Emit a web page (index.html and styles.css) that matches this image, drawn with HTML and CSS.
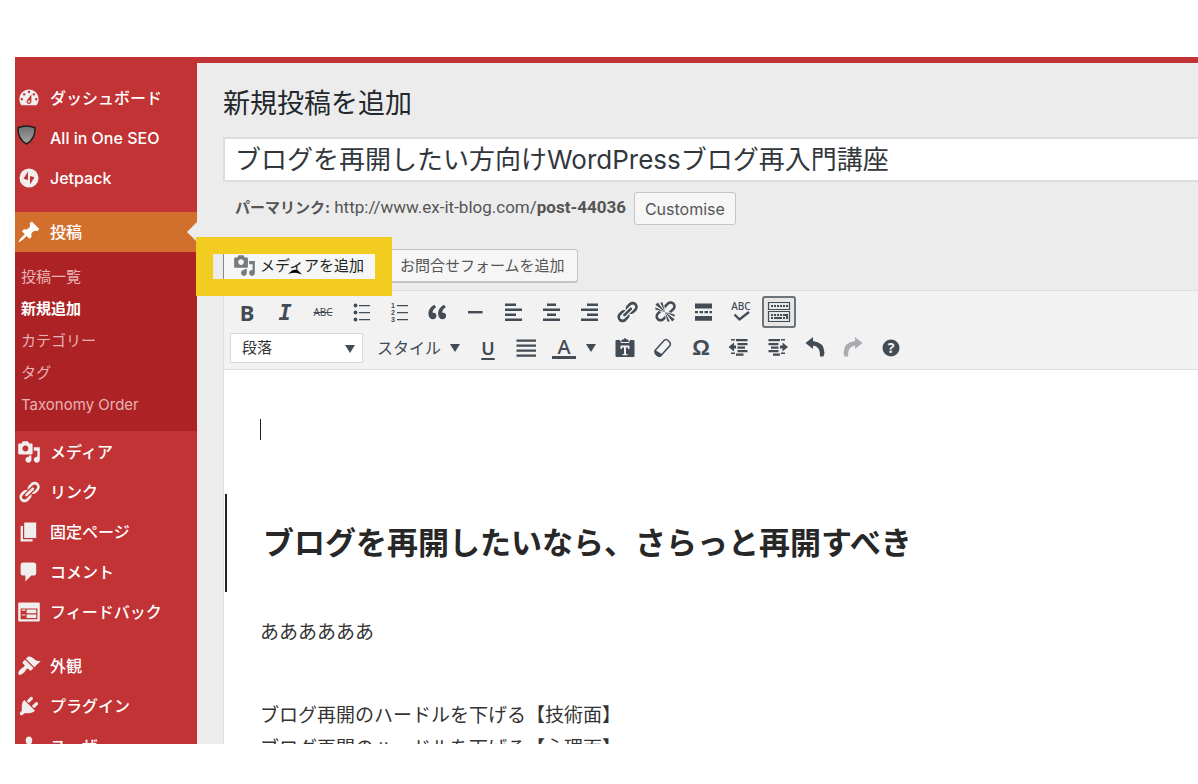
FILE: index.html
```html
<!DOCTYPE html>
<html lang="ja">
<head>
<meta charset="utf-8">
<meta name="viewport" content="width=device-width, initial-scale=1">
<title>新規投稿を追加</title>
<link rel="stylesheet" href="styles.css">
</head>
<body>
<div class="app">
  <nav class="sidebar" aria-label="メインメニュー">
    <ul class="menu">
      <li><a class="menu-link" href="#"><svg class="menu-icon" viewBox="0 0 20 20" aria-hidden="true"><path fill-rule="evenodd" d="M3.76 16h12.48c1.1-1.37 1.76-3.11 1.76-5 0-4.42-3.58-8-8-8s-8 3.58-8 8c0 1.89.66 3.63 1.76 5zM10 4c.55 0 1 .45 1 1s-.45 1-1 1-1-.45-1-1 .45-1 1-1zM6 6c.55 0 1 .45 1 1s-.45 1-1 1-1-.45-1-1 .45-1 1-1zm8 0c.55 0 1 .45 1 1s-.45 1-1 1-1-.45-1-1 .45-1 1-1zm-5.37 5.55L12 7v6c0 1.1-.9 2-2 2s-2-.9-2-2c0-.57.24-1.08.63-1.45zM4 10c.55 0 1 .45 1 1s-.45 1-1 1-1-.45-1-1 .45-1 1-1zm12 0c.55 0 1 .45 1 1s-.45 1-1 1-1-.45-1-1 .45-1 1-1zm-5 3c0-.55-.45-1-1-1s-1 .45-1 1 .45 1 1 1 1-.45 1-1z"/></svg>ダッシュボード</a></li>
      <li><a class="menu-link" href="#"><svg class="menu-icon" viewBox="0 0 24 24" aria-hidden="true"><defs><linearGradient id="shield" x1="0" y1="0" x2="0" y2="1"><stop offset="0" stop-color="#6c6f6e"/><stop offset="1" stop-color="#a5a8a6"/></linearGradient></defs><path d="M1 1.8Q9.500 -2 18 1.800Q18.500 13 9.500 18Q.5 13 1 1.800z" fill="url(#shield)" stroke="#1f1f1f" stroke-width="1.500"/></svg>All in One SEO</a></li>
      <li><a class="menu-link" href="#"><svg class="menu-icon" viewBox="0 0 24 24" aria-hidden="true"><circle cx="12" cy="12" r="9.500"/><path d="M11 5.500v8.500l-4.500-1.200zM13 18.500V10l4.500 1.200z" fill="#c13335"/></svg>Jetpack</a></li>
    </ul>
    <ul class="menu">
      <li><a class="menu-link is-current" href="#" aria-current="true"><svg class="menu-icon" viewBox="0 0 20 20" aria-hidden="true"><path d="M10.44 3.02l1.82-1.82 6.36 6.35-1.83 1.82c-1.05-.68-2.48-.57-3.41.36l-.75.75c-.92.93-1.04 2.35-.35 3.41l-1.83 1.82-2.41-2.41-2.8 2.79c-.42.42-3.38 2.71-3.8 2.29s1.86-3.39 2.28-3.81l2.79-2.79L4.1 9.36l1.83-1.82c1.05.69 2.48.57 3.4-.36l.75-.75c.93-.92 1.05-2.35.36-3.41z"/></svg>投稿</a>
        <ul class="submenu">
          <li><a href="#">投稿一覧</a></li>
          <li><a class="is-active" href="#" aria-current="page">新規追加</a></li>
          <li><a href="#">カテゴリー</a></li>
          <li><a href="#">タグ</a></li>
          <li><a href="#">Taxonomy Order</a></li>
        </ul>
      </li>
      <li><a class="menu-link" href="#"><svg class="menu-icon" viewBox="0 0 20 20" aria-hidden="true"><path d="M13 11V4c0-.55-.45-1-1-1h-1.67L9 1H5L3.67 3H2c-.55 0-1 .45-1 1v7c0 .55.45 1 1 1h10c.55 0 1-.45 1-1zM7 4.500c1.380 0 2.500 1.120 2.500 2.500S8.380 9.500 7 9.500 4.500 8.380 4.500 7 5.620 4.500 7 4.500zM14 6h5v10.500c0 1.380-1.120 2.500-2.500 2.500S14 17.880 14 16.500s1.120-2.500 2.500-2.500c.17 0 .34.02.5.05V9h-3V6zm-4 8.050V13h2v3.500c0 1.380-1.120 2.500-2.500 2.500S7 17.880 7 16.500 8.120 14 9.500 14c.17 0 .34.02.5.05z"/></svg>メディア</a></li>
      <li><a class="menu-link" href="#"><svg class="menu-icon" viewBox="0 0 20 20" aria-hidden="true"><path d="M17.74 2.76c1.68 1.69 1.68 4.41 0 6.1l-1.53 1.52c-1.12 1.12-2.7 1.47-4.14 1.09l2.62-2.61.76-.77.76-.76c.84-.84.84-2.2 0-3.04-.84-.85-2.2-.85-3.04 0l-.77.76-3.38 3.38c-.37-1.44-.02-3.02 1.1-4.14l1.52-1.53c1.69-1.68 4.42-1.68 6.1 0zM8.59 13.43l5.34-5.34c.42-.42.42-1.1 0-1.52-.44-.43-1.13-.39-1.53 0l-5.33 5.34c-.42.42-.42 1.1 0 1.52.44.43 1.13.39 1.52 0zm-.76 2.29l4.14-4.15c.38 1.44.03 3.02-1.09 4.14l-1.52 1.53c-1.69 1.68-4.41 1.68-6.1 0-1.68-1.68-1.68-4.42 0-6.1l1.53-1.52c1.12-1.12 2.7-1.47 4.14-1.1l-4.14 4.15c-.85.84-.85 2.2 0 3.05.84.84 2.2.84 3.04 0z"/></svg>リンク</a></li>
      <li><a class="menu-link" href="#"><svg class="menu-icon" viewBox="0 0 20 20" aria-hidden="true"><path d="M6 15V2h10v13H6zm-1 1h8v2H3V5h2v11z"/></svg>固定ページ</a></li>
      <li><a class="menu-link" href="#"><svg class="menu-icon" viewBox="0 0 20 20" aria-hidden="true"><path d="M5 2h9c1.1 0 2 .9 2 2v7c0 1.100-.9 2-2 2h-2l-5 5v-5H5c-1.100 0-2-.9-2-2V4c0-1.100.9-2 2-2z"/></svg>コメント</a></li>
      <li><a class="menu-link" href="#"><svg class="menu-icon" viewBox="0 0 20 20" aria-hidden="true"><path fill-rule="evenodd" d="M2 2h16c.55 0 1 .45 1 1v14c0 .55-.45 1-1 1H2c-.55 0-1-.45-1-1V3c0-.55.45-1 1-1zm15 14V7H3v9h14zM4 8v1h3V8H4zm4 0v3h8V8H8zm-4 4v1h3v-1H4zm4 0v3h8v-3H8z"/></svg>フィードバック</a></li>
    </ul>
    <ul class="menu">
      <li><a class="menu-link" href="#"><svg class="menu-icon" viewBox="0 0 20 20" aria-hidden="true"><path d="M14.48 11.06L7.41 3.99l1.5-1.5c.5-.56 2.3-.47 3.51.32 1.21.8 1.43 1.28 2.91 2.1 1.18.64 2.45 1.26 4.45.85zm-.71.71L6.7 4.7 4.93 6.47c-.39.39-.39 1.02 0 1.41l1.06 1.06c.39.39.39 1.03 0 1.42-.6.6-1.43 1.11-2.21 1.69-.35.26-.7.53-1.01.84C1.43 14.23.4 16.08 1.4 17.07c.99 1 2.84-.03 4.18-1.36.31-.31.58-.66.85-1.02.57-.78 1.08-1.61 1.69-2.21.39-.39 1.02-.39 1.41 0l1.06 1.06c.39.39 1.02.39 1.41 0z"/></svg>外観</a></li>
      <li><a class="menu-link" href="#"><svg class="menu-icon" viewBox="0 0 20 20" aria-hidden="true"><path d="M13.11 4.36L9.87 7.6 8 5.73l3.24-3.24c.35-.34 1.05-.2 1.56.32.52.51.66 1.21.31 1.55zm-8 1.77l.91-1.12 9.01 9.01-1.19.84c-.71.71-2.63 1.16-3.82 1.16H6.14L4.9 17.26c-.59.59-1.54.59-2.12 0-.59-.58-.59-1.53 0-2.12l1.24-1.24v-3.88c0-1.13.4-3.19 1.09-3.89zm7.26 3.97l3.24-3.24c.34-.35 1.04-.21 1.55.31.52.51.66 1.21.31 1.55l-3.24 3.25z"/></svg>プラグイン</a></li>
      <li><a class="menu-link" href="#"><svg class="menu-icon" viewBox="0 0 20 20" aria-hidden="true"><path d="M10 9.25c-2.27 0-2.73-3.44-2.73-3.44C7 4.02 7.82 2 9.97 2c2.16 0 2.98 2.02 2.71 3.81 0 0-.41 3.44-2.68 3.44zm0 2.57L12.72 10c2.39 0 4.52 2.33 4.52 4.53v2.49s-3.65 1.13-7.24 1.13c-3.65 0-7.24-1.13-7.24-1.13v-2.49c0-2.25 1.94-4.48 4.47-4.48z"/></svg>ユーザー</a></li>
    </ul>
  </nav>

  <main class="main">
    <h1 class="page-title">新規投稿を追加</h1>
    <input class="post-title" type="text" aria-label="タイトル" value="ブログを再開したい方向けWordPressブログ再入門講座">
    <div class="permalink">
      <span><strong>パーマリンク:</strong> <a href="#">http://www.ex-it-blog.com/<b>post-44036</b></a></span>
      <button class="button customise" type="button">Customise</button>
    </div>
    <div class="media-row">
      <button class="button add-media" type="button"><svg class="media-icon" viewBox="0 0 20 20" aria-hidden="true"><path d="M13 11V4c0-.55-.45-1-1-1h-1.670L9 1H5L3.670 3H2c-.55 0-1 .45-1 1v7c0 .55.45 1 1 1h10c.55 0 1-.45 1-1zM7 4.500c1.380 0 2.500 1.120 2.500 2.500S8.380 9.500 7 9.500 4.500 8.380 4.500 7 5.620 4.500 7 4.500zM14 6h5v10.500c0 1.380-1.120 2.500-2.500 2.500S14 17.880 14 16.500s1.120-2.500 2.500-2.500c.17 0 .34.02.5.05V9h-3V6zm-4 8.050V13h2v3.500c0 1.380-1.120 2.500-2.500 2.500S7 17.880 7 16.500 8.120 14 9.500 14c.17 0 .34.02.5.05z"/></svg>メディアを追加</button>
      <button class="button contact-form" type="button">お問合せフォームを追加</button>
      <div class="highlight"><svg class="scribble" viewBox="0 0 14 6" aria-hidden="true"><path d="M0 5L4 1.500Q7 0 10 1.500L14 5.500L9 4Q6 3 0 5z"/></svg></div>
    </div>

    <section class="editor">
      <div class="toolbar" role="toolbar" aria-label="書式">
        <div class="tool-row">
          <button class="tool letter-b" type="button" aria-label="太字">B</button>
          <button class="tool letter-i" type="button" aria-label="イタリック">I</button>
          <button class="tool letter-s" type="button" aria-label="打ち消し">ABC</button>
          <button class="tool" type="button" aria-label="番号なしリスト"><svg viewBox="0 0 24 24"><circle cx="6.500" cy="5.500" r="1.900"/><circle cx="6.500" cy="12.500" r="1.900"/><circle cx="6.500" cy="19.500" r="1.900"/><path d="M10 5h11v1.200H10zM10 12h11v1.200H10zM10 19h11v1.200H10z"/></svg></button>
          <button class="tool" type="button" aria-label="番号付きリスト"><svg viewBox="0 0 24 24"><g class="list-number"><text x="4" y="8">1</text><text x="4" y="15">2</text><text x="4" y="22">3</text></g><path d="M10 5h11v1.200H10zM10 12h11v1.200H10zM10 19h11v1.200H10z"/></svg></button>
          <button class="tool" type="button" aria-label="引用"><svg viewBox="0 0 20 20"><path d="M9.49 13.22c0-.74-.2-1.38-.61-1.9-.62-.78-1.83-.88-2.53-.72-.29-1.65 1.11-3.75 2.92-4.65L7.88 4c-2.73 1.3-5.42 4.28-4.96 8.05C3.21 14.43 4.59 16 6.54 16c.85 0 1.56-.25 2.12-.75s.83-1.18.83-2.03zm8.05 0c0-.74-.2-1.38-.61-1.9-.63-.78-1.83-.88-2.53-.72-.29-1.65 1.11-3.75 2.92-4.65L15.93 4c-2.73 1.3-5.41 4.28-4.95 8.05.29 2.38 1.66 3.95 3.61 3.95.85 0 1.56-.25 2.12-.75s.83-1.18.83-2.03z"/></svg></button>
          <button class="tool" type="button" aria-label="横ライン"><svg viewBox="0 0 24 24"><path d="M5 11h14.500v2.400H5z"/></svg></button>
          <button class="tool" type="button" aria-label="左寄せ"><svg viewBox="0 0 24 24"><path d="M4 3.500h11v2.400H4zM4 8.500h17v2.400H4zM4 13.500h11v2.400H4zM4 18.500h17v2.400H4z"/></svg></button>
          <button class="tool" type="button" aria-label="中央揃え"><svg viewBox="0 0 24 24"><path d="M8 3.500h9v2.400H8zM4 8.500h17v2.400H4zM8 13.500h9v2.400H8zM4 18.500h17v2.400H4z"/></svg></button>
          <button class="tool" type="button" aria-label="右寄せ"><svg viewBox="0 0 24 24"><path d="M10 3.500h11v2.400H10zM4 8.500h17v2.400H4zM10 13.500h11v2.400H10zM4 18.500h17v2.400H4z"/></svg></button>
          <button class="tool" type="button" aria-label="リンクの挿入"><svg viewBox="0 0 20 20"><path d="M17.74 2.76c1.68 1.69 1.68 4.41 0 6.1l-1.53 1.52c-1.12 1.12-2.7 1.47-4.14 1.09l2.62-2.61.76-.77.76-.76c.84-.84.84-2.2 0-3.04-.84-.85-2.2-.85-3.04 0l-.77.76-3.38 3.38c-.37-1.44-.02-3.02 1.1-4.14l1.52-1.53c1.69-1.68 4.42-1.68 6.1 0zM8.59 13.43l5.34-5.34c.42-.42.42-1.1 0-1.52-.44-.43-1.13-.39-1.53 0l-5.33 5.34c-.42.42-.42 1.1 0 1.52.44.43 1.13.39 1.52 0zm-.76 2.29l4.14-4.15c.38 1.44.03 3.02-1.09 4.14l-1.52 1.53c-1.69 1.68-4.41 1.68-6.1 0-1.68-1.68-1.68-4.42 0-6.1l1.53-1.52c1.12-1.12 2.7-1.47 4.14-1.1l-4.14 4.15c-.85.84-.85 2.2 0 3.05.84.84 2.2.84 3.04 0z"/></svg></button>
          <button class="tool" type="button" aria-label="リンクの削除"><svg viewBox="0 0 20 20"><path d="M17.74 2.26c1.68 1.69 1.68 4.41 0 6.1l-1.53 1.52c-.32.33-.69.58-1.08.77L13 10l1.69-1.64.76-.77.76-.76c.84-.84.84-2.2 0-3.04-.84-.85-2.2-.85-3.04 0l-.77.76-.76.76L10 7l-.65-2.14c.19-.38.44-.75.77-1.07l1.52-1.53c1.69-1.68 4.42-1.68 6.1 0zM2 4l8 6-6-8zm4-2l4 8-2-8H6zM2 6l8 4-8-2V6zm7.36 7.69L10 13l.74 2.35-1.38 1.39c-1.69 1.68-4.41 1.68-6.1 0-1.68-1.68-1.68-4.42 0-6.1l1.39-1.38L7 10l-.69.64-1.52 1.53c-.85.84-.85 2.2 0 3.04.84.85 2.2.85 3.04 0zM18 16l-8-6 6 8zm-4 2l-4-8 2 8h2zm4-4l-8-4 8 2v2z"/></svg></button>
          <button class="tool" type="button" aria-label="続きを読むタグ"><svg viewBox="0 0 24 24"><path d="M4 3.500h17v5H4zM4 11h3v2.200H4zM8.500 11h3.500v2.200H8.500zM13.500 11H17v2.200h-3.500zM18.500 11H21v2.200h-2.500zM4 16h17v4.800H4z"/></svg></button>
          <button class="tool" type="button" aria-label="スペルチェック"><svg viewBox="0 0 24 24"><text class="spell-letters" x="12" y="10">ABC</text><path d="M5.500 14.500l5 5L20 12" fill="none" stroke="currentColor" stroke-width="2.400"/></svg></button>
          <button class="tool is-pressed" type="button" aria-label="ツールバー切り替え" aria-pressed="true"><svg viewBox="0 0 24 24"><path fill="none" stroke="currentColor" stroke-width="1.200" d="M1.500 2.500h21v7h-21zM1.500 11.500h21v10h-21z"/><path d="M4 5h2v2H4zM7 5h2v2H7zM10 5h2v2h-2zM13 5h2v2h-2zM16 5h2v2h-2zM19 5h2v2h-2zM4 14h2v2H4zM7 14h2v2H7zM10 14h2v2h-2zM13 14h2v2h-2zM16 14h5v5h-2v-3h-3zM4 17h2v2H4zM7 17h8v2H7zM16 17h2v2h-2z"/></svg></button>
        </div>
        <div class="tool-row">
          <label class="select-wrap"><select class="format-select" aria-label="段落書式"><option>段落</option></select><svg class="caret" viewBox="0 0 10 8" aria-hidden="true"><path d="M0 0h10L5 8z"/></svg></label>
          <button class="style-menu" type="button">スタイル<svg class="caret" viewBox="0 0 10 8" aria-hidden="true"><path d="M0 0h10L5 8z"/></svg></button>
          <button class="tool letter-u" type="button" aria-label="下線">U</button>
          <button class="tool" type="button" aria-label="両端揃え"><svg viewBox="0 0 24 24"><path d="M2.500 3.500H22v2.300H2.500zM2.500 8.500H22v2.300H2.500zM2.500 13.500H22v2.300H2.500zM2.500 18.500H22v2.300H2.500z"/></svg></button>
          <div class="split">
            <button class="tool" type="button" aria-label="テキスト色"><span class="color-letter">A</span></button>
            <button class="split-arrow" type="button" aria-label="色を選択"><svg class="caret" viewBox="0 0 10 8"><path d="M0 0h10L5 8z"/></svg></button>
          </div>
          <button class="tool" type="button" aria-label="テキストとしてペースト"><svg viewBox="0 0 24 24"><path fill-rule="evenodd" d="M3.500 4H7l1 3h8l1-3h3.500q1 0 1 1v15q0 1-1 1h-17q-1 0-1-1V5q0-1 1-1zM7.500 9.500v3.500h1.500v-1.500h2v6.500H9.500v1.300h5V18H13v-6.500h2V13h1.500V9.500z"/><path d="M8 6l1-2.500h1.500q1.500-3 3 0H15L16 6z"/></svg></button>
          <button class="tool" type="button" aria-label="書式設定をクリア"><svg viewBox="0 0 24 24"><path d="M4 14.500L13.500 4Q15 3 16.500 4L19 6.500Q20 8 19 9.500L10 19.500Q8.500 21 6.500 19.500L4.500 17.500Q3.500 16 4 14.500z" fill="none" stroke="currentColor" stroke-width="1.500"/><path d="M4 14l7.500 4.500-2 2.300H7L4 18z"/></svg></button>
          <button class="tool letter-omega" type="button" aria-label="特殊文字">Ω</button>
          <button class="tool" type="button" aria-label="インデントを減らす"><svg viewBox="0 0 24 24"><path d="M1.500 11L7 6.500v3h2v3H7v3zM4 3h4v1.500H4zM9 3h11.500v2.300H9zM10.500 7h10v2.300h-10zM10.500 10.500H18v2.300h-7.500zM10.500 14h10v2.300h-10zM4 16.500h4V18H4zM9 17.500h7.500v2.300H9z"/></svg></button>
          <button class="tool" type="button" aria-label="インデントを増やす"><svg viewBox="0 0 24 24"><path d="M23 11l-5.500-4.500v3H15v3h2.500v3zM3.500 3H15v2.300H3.500zM16 3h4v1.500h-4zM3.500 7h10v2.300h-10zM6 10.500h7.500v2.300H6zM3.500 14h10v2.300h-10zM16 16.500h4V18h-4zM8 17.500h7v2.300H8z"/></svg></button>
          <button class="tool" type="button" aria-label="取り消し"><svg viewBox="0 0 24 24"><path d="M2.500 7l7.500-6v4q11 1 11.500 12l-1 3.500h-3.500Q17.500 10.500 10 9.500v3.500z"/></svg></button>
          <button class="tool is-disabled" type="button" aria-label="やり直し" disabled><svg viewBox="0 0 24 24"><path d="M21.500 7L14 1v4Q3 6 2.500 17l1 3.500H7Q6.500 10.500 14 9.500v3.500z"/></svg></button>
          <button class="tool" type="button" aria-label="ヘルプ"><svg viewBox="0 0 24 24"><circle cx="12" cy="12" r="8.500"/><text class="help-mark" x="12" y="17">?</text></svg></button>
        </div>
      </div>
      <article class="document">
        <p class="line"><span class="text-cursor"></span></p>
        <h2 class="heading">ブログを再開したいなら、さらっと再開すべき</h2>
        <p class="line paragraph">ああああああ</p>
        <p class="line">ブログ再開のハードルを下げる【技術面】<br>ブログ再開のハードルを下げる【心理面】</p>
      </article>
    </section>
  </main>
</div>
</body>
</html>
```
FILE: styles.css
```css
* { box-sizing: border-box; }

body {
  margin: 0;
  height: 100vh;
  padding: 57px 0 40px 15px;
  background: #fff;
  color: #444;
  font: 15px/24px Inter, "Noto Sans CJK JP", sans-serif;
}

ul { list-style: none; margin: 0; padding: 0; }
a { color: inherit; text-decoration: none; }
button, input, select { font: inherit; color: inherit; margin: 0; }
button { padding: 0; border: 0; background: none; }
svg { display: block; fill: currentColor; overflow: visible; }

.app {
  display: grid;
  grid-template-columns: 182px minmax(0, 1fr);
  height: 100%;
  overflow: hidden;
  border-top: 6px solid #c13335;
  background: #ececec;
}

/* Sidebar */
.sidebar {
  display: flex;
  flex-direction: column;
  gap: 14px;
  padding-top: 15px;
  background: #c13335;
  color: #fff;
}
.menu-link {
  position: relative;
  display: flex;
  align-items: center;
  gap: 9px;
  height: 40px;
  padding-left: 2px;
  font-size: 16px;
  font-weight: 500;
}
.menu-icon { flex: none; width: 24px; height: 24px; fill: #f1eeee; }
.is-current { background: #d36f2d; }
.is-current .menu-icon { fill: #fff; }
.is-current::after {
  content: "";
  position: absolute;
  right: 0;
  top: 10px;
  border: 10px solid transparent;
  border-left-width: 0;
  border-right-color: #ececec;
}
.submenu {
  padding: 9px 6px 10px;
  margin-bottom: 1px;
  background: #ad2225;
  color: #e7b3b4;
  line-height: 32px;
}
.submenu a { display: block; }
.submenu .is-active { color: #fff; font-weight: 700; }

/* Header area */
.main {
  display: flex;
  flex-direction: column;
  min-width: 0;
  padding: 21px 0 0 26px;
}
.page-title {
  margin: 0 0 13px;
  color: #23282d;
  font-size: 27px;
  font-weight: 400;
  line-height: 40px;
}
.post-title {
  width: 100%;
  height: 45px;
  padding: 0 10px 4px;
  border: 2px solid #ddd;
  border-right: 0;
  background: #fff;
  color: #32373c;
  font-size: 26px;
}
.permalink {
  display: flex;
  align-items: flex-start;
  gap: 8px;
  margin: 10px 0 24px;
  padding-left: 12px;
  line-height: 30px;
  color: #555;
}
.permalink a { font-family: Roboto, sans-serif; font-size: 17px; }
.button {
  height: 33px;
  padding: 0 12px;
  border: 1px solid #c4c4c4;
  border-radius: 3px;
  background: #f6f6f6;
  color: #555;
}
.permalink .customise { padding: 0 10px; font-size: 16px; }
.media-row {
  position: relative;
  display: flex;
  gap: 5px;
  margin-bottom: 8px;
}
.contact-form { box-shadow: 0 1px 0 #c4c4c4; }
.add-media {
  display: flex;
  align-items: center;
  gap: 4px;
  min-width: 159px;
  padding: 0 9px;
  border-color: #888;
  border-radius: 0;
  color: #222;
}
.media-icon { width: 23px; height: 23px; fill: #777b80; }
/* Callout frame drawn over the button */
.highlight {
  position: absolute;
  left: -27px;
  top: -12px;
  width: 196px;
  height: 59px;
  border: 17px solid #f2cc21;
}
.scribble {
  position: absolute;
  left: 75px;
  top: 15px;
  width: 14px;
  height: 6px;
  fill: #000;
}

/* Editor */
.editor {
  flex: 1;
  min-height: 0;
  border-left: 1px solid #dedede;
  background: #fff;
}
.toolbar {
  display: flex;
  flex-direction: column;
  gap: 4px;
  padding: 5px 6px;
  border: solid #dedede;
  border-width: 1px 0;
  background: #f2f2f2;
  color: #434b55;
}
.tool-row { display: flex; align-items: center; gap: 4px; }
.tool {
  display: grid;
  place-items: center;
  width: 34px;
  height: 32px;
}
.tool svg { width: 24px; height: 24px; }
.letter-b { font: 700 22px "Noto Sans", sans-serif; }
.letter-i { font: italic 700 22px "DejaVu Sans Mono", monospace; }
.letter-s { font: 10px "Noto Sans", sans-serif; text-decoration: line-through; }
.letter-u { font: 600 18px "Noto Sans", sans-serif; text-decoration: underline 2px; text-underline-offset: 3px; }
.letter-omega { font: 700 22px "Liberation Sans", sans-serif; }
.list-number { font: 700 7px "Liberation Sans", sans-serif; }
.spell-letters { font: 500 10px "Noto Sans", sans-serif; text-anchor: middle; }
.help-mark { font: 700 14px "Noto Sans", sans-serif; text-anchor: middle; fill: #f2f2f2; }
.is-pressed { border: 2px solid #6d737a; border-radius: 3px; background: #e7e7e7; }
.is-disabled { color: #a9adb2; }
.caret { width: 10px; height: 8px; }
.select-wrap { position: relative; width: 133px; }
.format-select {
  display: block;
  width: 100%;
  height: 30px;
  padding: 0 11px;
  border: 1px solid #d8d8d8;
  appearance: none;
  background: #fff;
  color: #333;
}
.select-wrap .caret { position: absolute; right: 8px; top: 12px; }
.style-menu {
  display: flex;
  align-items: center;
  gap: 9px;
  width: 100px;
  padding-left: 10px;
  font-size: 16px;
}
.split { display: flex; width: 57px; }
.split-arrow { padding: 0 5px; }
.color-letter {
  width: 24px;
  border-bottom: 3px solid #434b55;
  font: 500 20px/18px "Noto Sans", sans-serif;
}

.document { padding-top: 43px; color: #333; }
.line {
  margin: 0;
  padding-left: 36px;
  font-size: 19px;
  line-height: 33px;
}
.text-cursor {
  display: block;
  width: 1px;
  height: 33px;
  border: solid #fff;
  border-width: 6px 0;
  background: #222;
}
.heading {
  margin: 48px 0 24px 1px;
  padding-left: 36px;
  border-left: 2px solid #222;
  color: #272727;
  font-size: 31px;
  line-height: 98px;
}
.paragraph { margin-bottom: 50px; }
```
